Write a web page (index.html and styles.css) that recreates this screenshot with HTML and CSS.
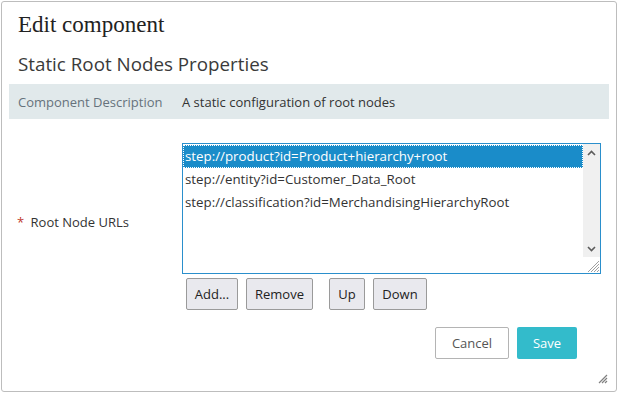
FILE: index.html
```html
<!DOCTYPE html>
<html lang="en">
<head>
  <meta charset="UTF-8">
  <meta name="viewport" content="width=device-width, initial-scale=1.0">
  <title>Edit component</title>
  <link rel="stylesheet" href="styles.css">
</head>
<body>
  <div class="dialog">
    <h1 class="dialog-title">Edit component</h1>
    <h2 class="section-title">Static Root Nodes Properties</h2>

    <div class="desc-row">
      <div class="desc-label">Component Description</div>
      <div class="desc-value">A static configuration of root nodes</div>
    </div>

    <div class="field-row">
      <div class="field-label"><span class="required">*</span> Root Node URLs</div>
      <div class="field-control">
        <div class="url-list">
          <div class="url-items">
            <div class="url-item selected">step://product?id=Product+hierarchy+root</div>
            <div class="url-item">step://entity?id=Customer_Data_Root</div>
            <div class="url-item">step://classification?id=MerchandisingHierarchyRoot</div>
          </div>
          <div class="scrollbar">
            <div class="scroll-track">
              <div class="scroll-arrow">
                <svg width="9" height="6" viewBox="0 0 9 6"><path d="M1 5 L4.5 1.5 L8 5" fill="none" stroke="#5c5c5c" stroke-width="1.6"/></svg>
              </div>
              <div class="scroll-arrow">
                <svg width="9" height="6" viewBox="0 0 9 6"><path d="M1 1 L4.5 4.5 L8 1" fill="none" stroke="#5c5c5c" stroke-width="1.6"/></svg>
              </div>
            </div>
            <div class="scroll-corner">
              <svg width="14" height="14" viewBox="0 0 14 14">
                <path d="M13 2 L2 13 M13 5 L5 13 M13 8 L8 13 M13 11 L11 13" stroke="#a0a0a0" stroke-width="1"/>
              </svg>
            </div>
          </div>
        </div>

        <div class="list-buttons">
          <button class="btn btn-add">Add...</button>
          <button class="btn btn-remove">Remove</button>
          <button class="btn btn-up">Up</button>
          <button class="btn btn-down">Down</button>
        </div>
      </div>
    </div>

    <div class="dialog-footer">
      <button class="btn-cancel">Cancel</button>
      <button class="btn-save">Save</button>
    </div>

    <svg class="dialog-grip" width="11" height="11" viewBox="0 0 11 11">
      <path d="M10 2 L2 10 M10 5 L5 10 M10 8 L8 10" stroke="#808080" stroke-width="1.2"/>
    </svg>
  </div>
</body>
</html>
```

FILE: styles.css
```css
body {
  margin: 1px;
  font-family: "Open Sans", Arial, sans-serif;
  font-size: 13px;
  color: #333;
  background: #fff;
}
.dialog {
  position: relative;
  width: 616px;
  height: 391px;
  box-sizing: border-box;
  border: 1px solid #bdbdbd;
  border-radius: 3px;
}
.dialog-title {
  margin: 0;
  padding: 9px 16px 0;
  font-family: "Liberation Serif", "Times New Roman", serif;
  font-size: 23px;
  font-weight: normal;
  line-height: 28px;
  color: #222;
}
.section-title {
  margin: 12px 0 0;
  padding: 0 16px;
  font-size: 18.8px;
  font-weight: normal;
  line-height: 26px;
  color: #3a3a3a;
}
.desc-row {
  display: flex;
  align-items: center;
  height: 35px;
  margin: 7px 7px 0;
  background: #e1e9eb;
}
.desc-label {
  width: 164px;
  padding-left: 9px;
  color: #66727c;
}
.desc-value {
  color: #333;
}
.field-row {
  display: flex;
  margin-top: 24px;
}
.field-label {
  width: 165px;
  padding: 69px 0 0 15px;
  line-height: 20px;
  color: #333;
}
.required {
  color: #c0392b;
  margin-right: 3px;
}
.url-list {
  display: flex;
  width: 419px;
  height: 131px;
  box-sizing: border-box;
  border: 1px solid #2a8fcc;
}
.url-items {
  flex: 1;
  padding-top: 1px;
  font-size: 13.3px;
}
.url-item {
  height: 23px;
  line-height: 23px;
  padding-left: 2px;
  white-space: nowrap;
}
.url-item.selected {
  background: #1a8cc9;
  color: #fff;
  outline: 1px dotted #fff;
  outline-offset: -1px;
}
.scrollbar {
  display: flex;
  flex-direction: column;
  width: 17px;
}
.scroll-track {
  flex: 1;
  display: flex;
  flex-direction: column;
  justify-content: space-between;
  background: #f0f0f0;
}
.scroll-arrow {
  display: flex;
  align-items: center;
  justify-content: center;
  height: 17px;
}
.scroll-corner {
  display: flex;
  align-items: flex-end;
  justify-content: flex-end;
  height: 16px;
  background: #fff;
}
.list-buttons {
  display: flex;
  gap: 8px;
  margin: 4px 0 0 4px;
}
.btn {
  height: 32px;
  padding: 0;
  border: 1px solid #9a9a9a;
  border-radius: 2px;
  background: #e9e9ee;
  font-family: inherit;
  font-size: 13px;
  color: #222;
}
.btn-add { width: 52px; }
.btn-remove { width: 67px; }
.btn-up { width: 36px; margin-left: 8px; }
.btn-down { width: 54px; }
.dialog-footer {
  display: flex;
  justify-content: flex-end;
  gap: 8px;
  margin-top: 17px;
  padding-right: 39px;
}
.btn-cancel,
.btn-save {
  height: 32px;
  border-radius: 2px;
  font-family: inherit;
  font-size: 13px;
}
.btn-cancel {
  width: 74px;
  border: 1px solid #b4b4b4;
  background: #fff;
  color: #555;
}
.btn-save {
  width: 60px;
  border: none;
  background: #33bbcb;
  color: #fff;
}
.dialog-grip {
  position: absolute;
  right: 8px;
  bottom: 7px;
}
```
